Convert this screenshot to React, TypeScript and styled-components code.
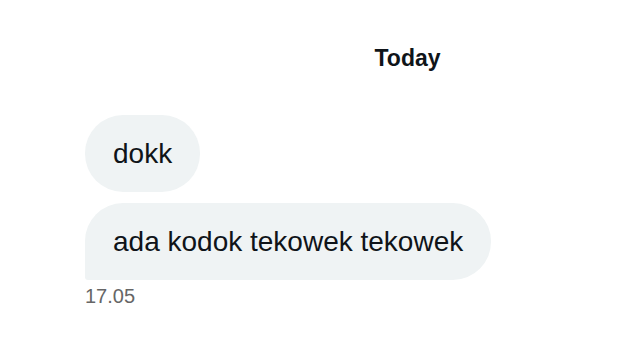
import { FC } from "react";
import styled, { createGlobalStyle } from "styled-components";

const GlobalStyle = createGlobalStyle`
  html, body {
    margin: 0;
    background: #ffffff;
  }
`;

const messages = ["dokk", "ada kodok tekowek tekowek"];

const App: FC = () => {
  return (
    <>
      <GlobalStyle />
      <Page>
        <DateHeader>Today</DateHeader>
        <Thread>
          {messages.map((text, idx) => (
            <Bubble key={idx} last={idx === messages.length - 1}>
              {text}
            </Bubble>
          ))}
          <Time>17.05</Time>
        </Thread>
      </Page>
    </>
  );
};

const Page = styled.div`
  width: 640px;
  height: 360px;
  box-sizing: border-box;
  padding-top: 45px;
  font-family: "Liberation Sans", Arial, sans-serif;
  color: #0f1419;
  overflow: hidden;
`;

const DateHeader = styled.div`
  display: flex;
  justify-content: center;
  padding-left: 175px;
  font-size: 23px;
  line-height: 27px;
  font-weight: 700;
`;

const Thread = styled.div`
  display: flex;
  flex-direction: column;
  align-items: flex-start;
  gap: 11px;
  margin-top: 43px;
  padding-left: 85px;
`;

const Bubble = styled.div<{ last: boolean }>`
  background: #eff3f4;
  padding: 22px 28px;
  font-size: 28px;
  line-height: 33px;
  border-radius: ${(props) => (props.last ? "38px 38px 38px 3px" : "38px")};
`;

const Time = styled.div`
  margin-top: -6px;
  font-size: 20px;
  line-height: 23px;
  color: #666666;
`;

export default App;
